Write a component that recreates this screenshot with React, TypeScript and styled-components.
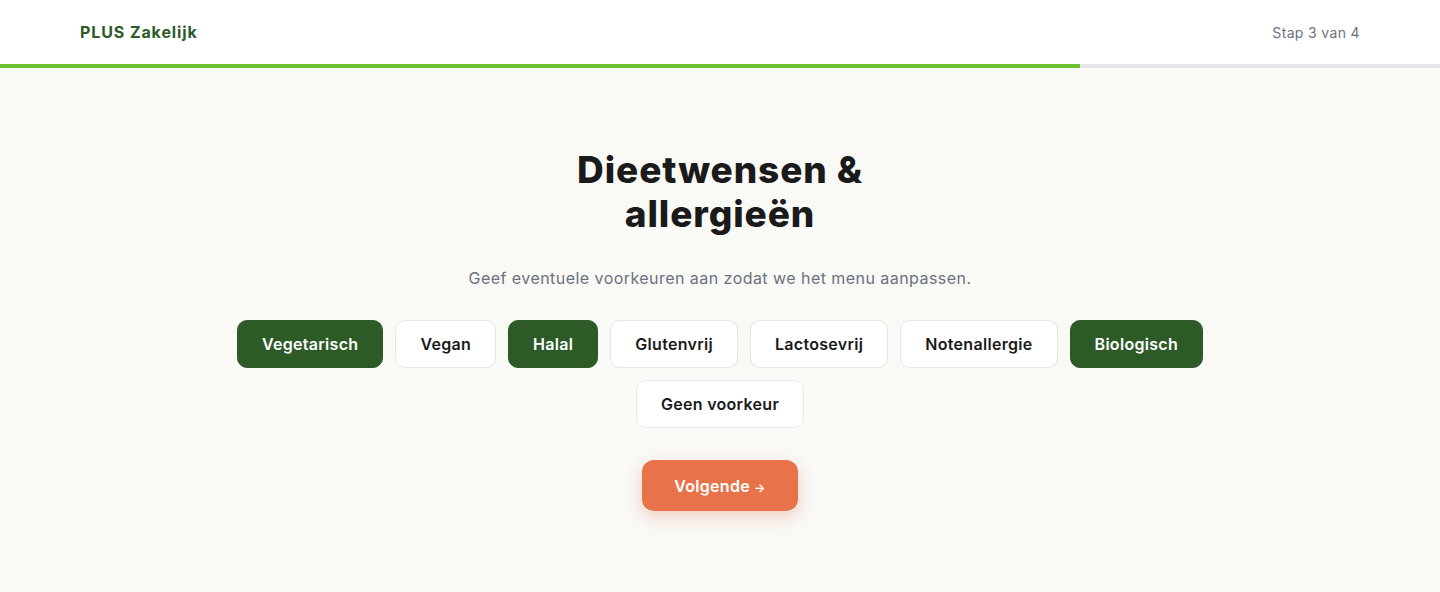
import styled, { createGlobalStyle } from 'styled-components';
import { useState } from 'react';

const GlobalStyle = createGlobalStyle`
  * {
    box-sizing: border-box;
  }
  body {
    margin: 0;
    background: #f9f9f6;
    font-family: Inter, 'Noto Sans', sans-serif;
    color: #1a1a1a;
  }
`

const StyledHeader = styled.header`
  height: 64px;
  background: #ffffff;
  display: flex;
  align-items: center;
  justify-content: space-between;
  padding: 0 80px;
`

const StyledLogo = styled.div`
  font-size: 16px;
  font-weight: 700;
  letter-spacing: 0.9px;
  color: #2d5a27;
`

const StyledStep = styled.div`
  font-size: 14px;
  letter-spacing: 0.35px;
  color: #6b7280;
`

const StyledTrack = styled.div`
  height: 4px;
  background: #e5e7eb;
`

const StyledFill = styled.div`
  height: 100%;
  background: #6cc231;
`

const StyledMain = styled.main`
  display: flex;
  flex-direction: column;
  align-items: center;
  padding: 80px 24px 80px;
`

const StyledH1 = styled.h1`
  margin: 0 0 30px;
  max-width: 360px;
  text-align: center;
  font-size: 37px;
  line-height: 44px;
  font-weight: 800;
  letter-spacing: 0.9px;
  color: #1a1a1a;
`

const StyledSub = styled.p`
  margin: 0 0 30px;
  font-size: 16px;
  line-height: 24px;
  letter-spacing: 0.45px;
  color: #6b7280;
`

const StyledChips = styled.div`
  display: flex;
  flex-wrap: wrap;
  justify-content: center;
  gap: 12px;
  max-width: 1000px;
  margin-bottom: 32px;
`

const StyledChip = styled.button<{ $active: boolean }>`
  height: 48px;
  padding: 0 24px;
  border-radius: 10px;
  border: 1px solid ${p => (p.$active ? '#2d5a27' : '#e5e7eb')};
  background: ${p => (p.$active ? '#2d5a27' : '#ffffff')};
  color: ${p => (p.$active ? '#ffffff' : '#1a1a1a')};
  font-family: inherit;
  font-size: 16px;
  font-weight: 600;
  letter-spacing: 0.3px;
  cursor: pointer;
`

const StyledNext = styled.button`
  height: 51px;
  padding: 0 32px;
  border: none;
  border-radius: 12px;
  background: #e8734a;
  color: #ffffff;
  font-family: inherit;
  font-size: 16px;
  font-weight: 600;
  letter-spacing: 0.3px;
  box-shadow: 0 6px 16px rgba(232, 115, 74, 0.3);
  cursor: pointer;
`

const StyledArrow = styled.span`
  font-size: 12px;
  margin-left: 4px;
`

const options = [
  'Vegetarisch',
  'Vegan',
  'Halal',
  'Glutenvrij',
  'Lactosevrij',
  'Notenallergie',
  'Biologisch',
  'Geen voorkeur',
]

export default function App() {
  const [selected, setSelected] = useState<string[]>(['Vegetarisch', 'Halal', 'Biologisch'])

  const toggle = (name: string) => {
    setSelected(prev =>
      prev.includes(name) ? prev.filter(n => n !== name) : [...prev, name]
    )
  }

  return (
    <>
      <GlobalStyle />
      <StyledHeader>
        <StyledLogo>PLUS Zakelijk</StyledLogo>
        <StyledStep>Stap 3 van 4</StyledStep>
      </StyledHeader>
      <StyledTrack>
        <StyledFill style={{ width: `${(3 / 4) * 100}%` }} />
      </StyledTrack>

      <StyledMain>
        <StyledH1>Dieetwensen &amp; allergieën</StyledH1>
        <StyledSub>Geef eventuele voorkeuren aan zodat we het menu aanpassen.</StyledSub>
        <StyledChips>
          {options.map(o => (
            <StyledChip key={o} $active={selected.includes(o)} onClick={() => toggle(o)}>
              {o}
            </StyledChip>
          ))}
        </StyledChips>
        <StyledNext>
          Volgende<StyledArrow>→</StyledArrow>
        </StyledNext>
      </StyledMain>
    </>
  )
}
